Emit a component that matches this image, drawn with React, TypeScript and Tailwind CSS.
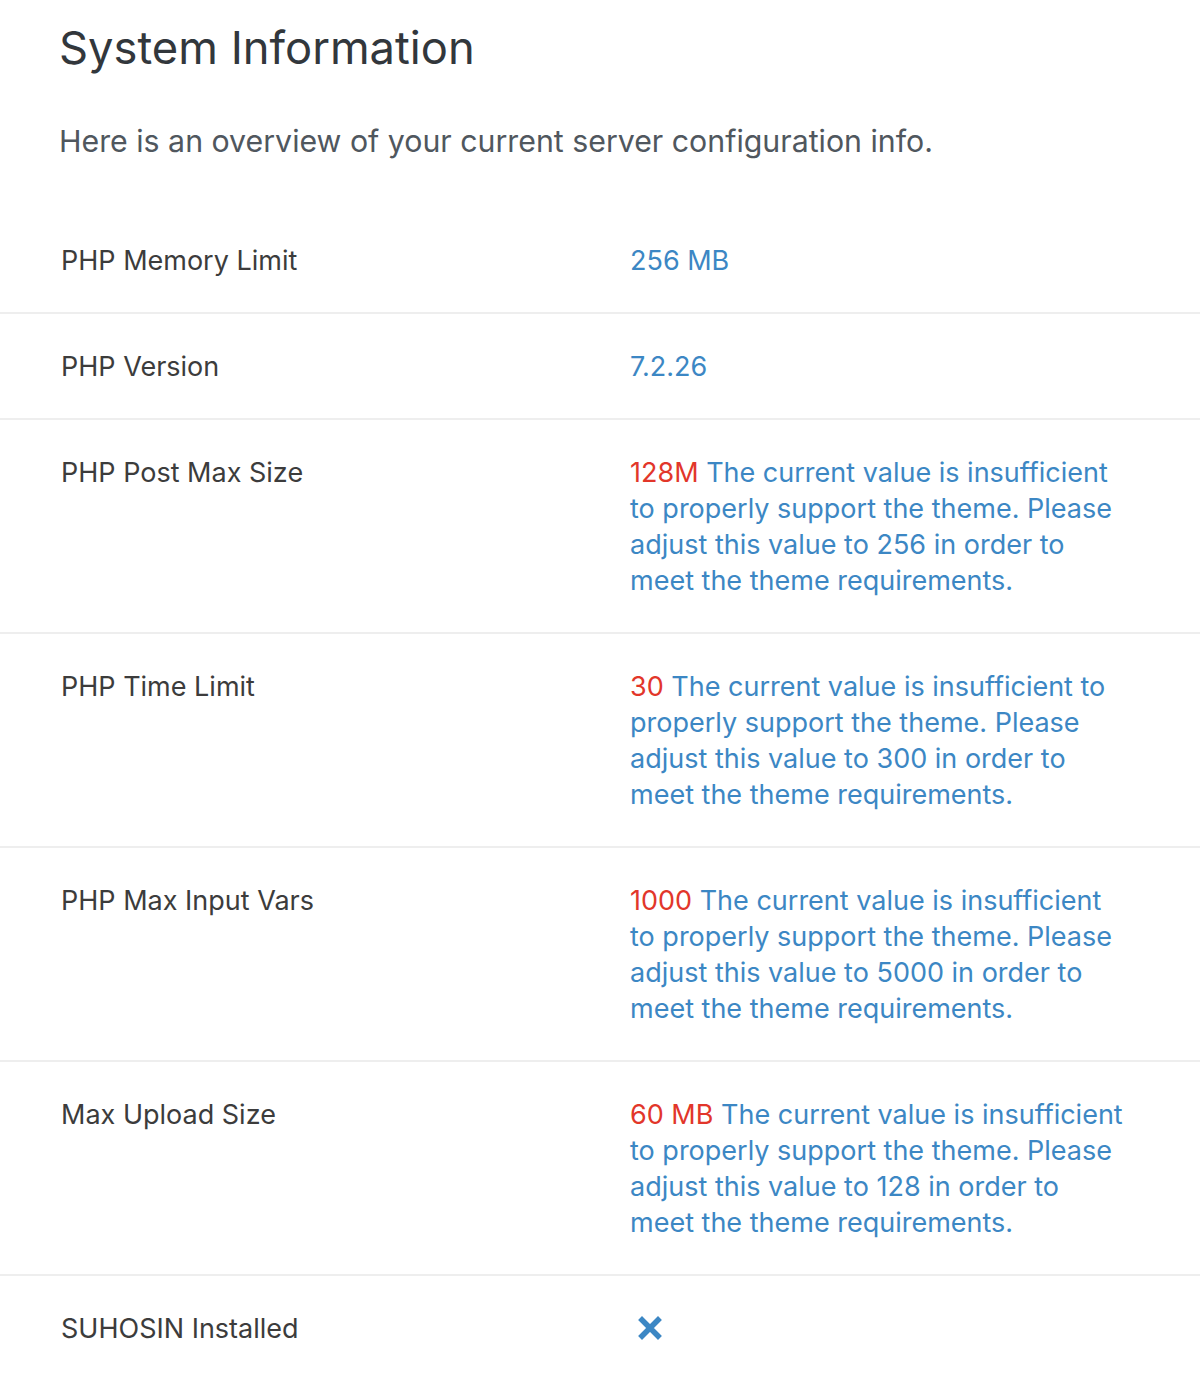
const rows: { label: string; value?: string; bad?: string; fix?: string; icon?: boolean }[] = [
    { label: "PHP Memory Limit", value: "256 MB" },
    { label: "PHP Version", value: "7.2.26" },
    { label: "PHP Post Max Size", bad: "128M", fix: "256" },
    { label: "PHP Time Limit", bad: "30", fix: "300" },
    { label: "PHP Max Input Vars", bad: "1000", fix: "5000" },
    { label: "Max Upload Size", bad: "60 MB", fix: "128" },
    { label: "SUHOSIN Installed", icon: true },
];

function CrossIcon() {
    return (
        <svg width="26" height="26" viewBox="0 0 26 26" className="ml-[7px] mt-[4px]">
            <path d="M5 5 L21 21 M21 5 L5 21" stroke="#3c87c4" strokeWidth="5.5" strokeLinecap="square" />
        </svg>
    );
}

export default function App() {
    return (
        <div className="min-h-[1398px] bg-white font-['Inter',sans-serif]">
            <div className="px-[59px] pt-[18px]">
                <h1 className="text-[45.3px] leading-[60px] text-[#32373c]">System Information</h1>
                <p className="mt-[43px] text-[30.3px] leading-[40px] text-[#50575e]">
                    Here is an overview of your current server configuration info.
                </p>
            </div>

            <div className="mt-[47px]">
                {rows.map((row, i) => (
                    <div
                        key={row.label}
                        className={`flex pt-[35px] pb-[33px] text-[27px] leading-[36px] ${i > 0 ? "border-t-2 border-[#eeeeee]" : ""}`}
                    >
                        <div className="w-[630px] shrink-0 pl-[61px] text-[#3c3c3c]">{row.label}</div>
                        <div className="w-[498px] text-[#3c87c4]">
                            {row.icon && <CrossIcon />}
                            {row.value}
                            {row.bad && (
                                <>
                                    <span className="text-[#e2362a]">{row.bad}</span> The current value is insufficient to
                                    properly support the theme. Please adjust this value to {row.fix} in order to meet the
                                    theme requirements.
                                </>
                            )}
                        </div>
                    </div>
                ))}
            </div>
        </div>
    );
}
